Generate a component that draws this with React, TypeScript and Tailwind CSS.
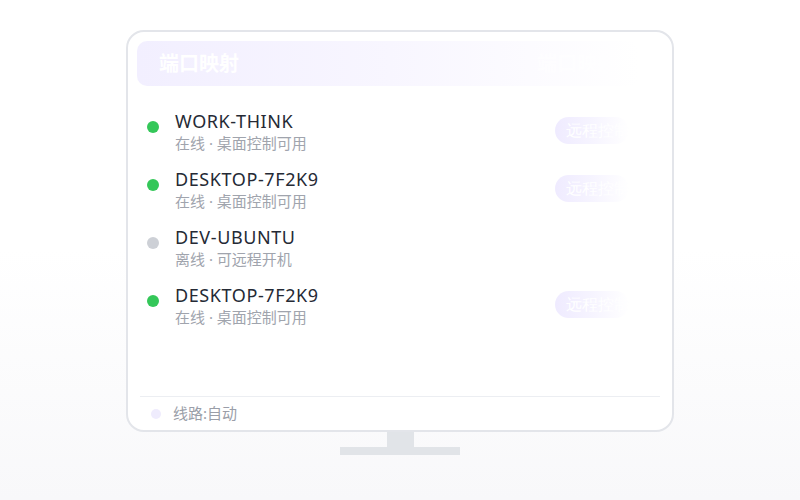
type Device = {
  name: string;
  status: string;
  online: boolean;
};

const devices: Device[] = [
  { name: "WORK-THINK", status: "在线 · 桌面控制可用", online: true },
  { name: "DESKTOP-7F2K9", status: "在线 · 桌面控制可用", online: true },
  { name: "DEV-UBUNTU", status: "离线 · 可远程开机", online: false },
  { name: "DESKTOP-7F2K9", status: "在线 · 桌面控制可用", online: true },
];

function DeviceRow({ device }: { device: Device }) {
  return (
    <div className="flex h-[58px] items-start pl-[10px] pr-[34px]">
      <span
        className={`mt-[11px] h-3 w-3 shrink-0 rounded-full ${
          device.online ? "bg-[#34c759]" : "bg-[#cdd0d6]"
        }`}
      />
      <div className="ml-4 flex flex-col">
        <span className="text-[18px] leading-[22px] tracking-[0.6px] text-[#252a35]">{device.name}</span>
        <span className="mt-[1px] text-[15px] leading-[20px] text-[#a0a4ad]">{device.status}</span>
      </div>
      {device.online && (
        <button className="ml-auto mt-[7px] h-[27px] w-[74px] overflow-hidden whitespace-nowrap rounded-full bg-gradient-to-r from-[#efebff] via-[#f6f4ff] to-white pl-[11px] text-left font-serif text-[16px] text-white">
          远程控制
        </button>
      )}
    </div>
  );
}

export default function App() {
  return (
    <div className="flex h-[500px] w-[800px] flex-col items-center bg-gradient-to-b from-white via-white to-[#f8f8fa] pt-[30px] font-['Noto_Sans','Noto_Sans_CJK_SC',sans-serif]">
      <div className="flex h-[402px] w-[548px] flex-col rounded-[18px] border-2 border-[#e3e5ea] bg-white px-[9px] pt-[9px]">
        <div className="mr-[24px] flex h-[45px] items-center justify-between rounded-[10px] bg-gradient-to-r from-[#f2efff] via-[#f8f6ff] to-white px-[22px]">
          <span className="text-[20px] font-bold text-white">端口映射</span>
          <span className="text-[20px] font-bold text-white/60">端口映射</span>
        </div>

        <div className="mt-[24px] flex flex-1 flex-col">
          {devices.map((device, index) => (
            <DeviceRow key={`${device.name}-${index}`} device={device} />
          ))}
        </div>

        <div className="mx-[3px] flex h-[34px] items-center border-t border-[#eceef2] pl-[11px]">
          <span className="h-[10px] w-[10px] rounded-full bg-[#efecfd]" />
          <span className="ml-[12px] text-[15px] text-[#9a9ea8]">线路:自动</span>
        </div>
      </div>

      <div className="h-[15px] w-[27px] bg-[#e1e4e8]" />
      <div className="h-[8px] w-[120px] bg-[#e1e4e8]" />
    </div>
  );
}
